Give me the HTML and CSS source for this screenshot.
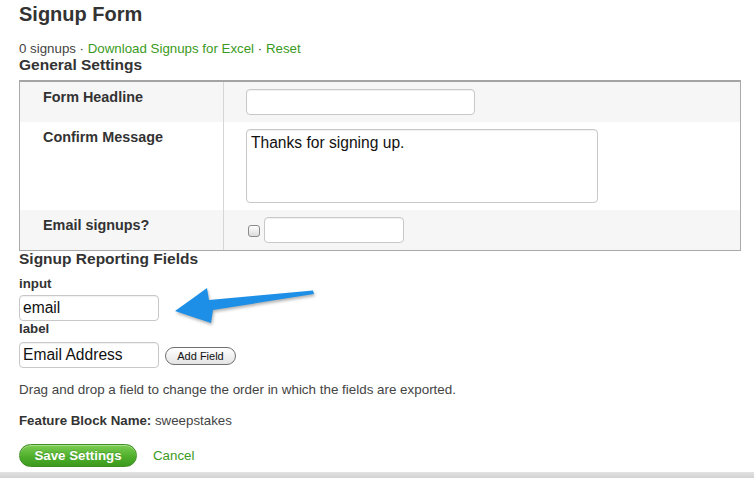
FILE: index.html
```html
<!DOCTYPE html>
<html lang="en">
<head>
<meta charset="utf-8">
<title>Signup Form</title>
<link rel="stylesheet" href="styles.css">
</head>
<body>
<main class="page">
  <h1 class="title">Signup Form</h1>
  <p class="meta">0 signups · <a href="#" class="link">Download Signups for Excel</a> · <a href="#" class="link">Reset</a></p>
  <h2 class="section-title">General Settings</h2>
  <table class="settings">
    <tr class="row-alt">
      <th class="setting-label">Form Headline</th>
      <td class="setting-value"><input class="text-input headline-input" type="text"></td>
    </tr>
    <tr>
      <th class="setting-label">Confirm Message</th>
      <td class="setting-value"><textarea class="text-area">Thanks for signing up.</textarea></td>
    </tr>
    <tr class="row-alt">
      <th class="setting-label">Email signups?</th>
      <td class="setting-value">
        <div class="inline-controls">
          <input class="checkbox" type="checkbox">
          <input class="text-input email-input" type="text">
        </div>
      </td>
    </tr>
  </table>

  <section class="reporting">
    <h2 class="section-title reporting-title">Signup Reporting Fields</h2>
    <label class="field-label">input</label>
    <input class="text-input field-input" type="text" value="email">
    <label class="field-label">label</label>
    <div class="field-row">
      <input class="text-input field-input" type="text" value="Email Address">
      <button class="small-button" type="button">Add Field</button>
    </div>
    <svg class="callout-arrow" width="150" height="48" viewBox="0 0 150 48" aria-hidden="true">
      <polygon points="5,28 37,5 39,17 143,7.5 144,11 43,27 41,40" fill="#1e8fe6"/>
    </svg>
  </section>

  <p class="hint">Drag and drop a field to change the order in which the fields are exported.</p>
  <p class="block-name"><strong>Feature Block Name:</strong> sweepstakes</p>
  <div class="actions">
    <button class="save-button" type="button">Save Settings</button>
    <a href="#" class="link cancel">Cancel</a>
  </div>
</main>
<div class="page-edge"></div>
</body>
</html>
```

FILE: styles.css
```css
* { box-sizing: border-box; }

html, body {
  margin: 0;
  padding: 0;
  background: #fff;
  overflow: hidden;
}

body {
  font-family: "Liberation Sans", Arial, Helvetica, sans-serif;
  color: #333;
}

.page {
  position: relative;
  padding: 2px 0 0 19px;
  height: 472px;
}

.title {
  margin: 0;
  font-size: 20px;
  line-height: 24px;
  font-weight: bold;
  color: #333;
}

.meta {
  margin: 15px 0 0;
  font-size: 13.3px;
  line-height: 15px;
  color: #444;
}

.link {
  color: #3b9a22;
  text-decoration: none;
}

.section-title {
  margin: 1px 0 0;
  font-size: 15.5px;
  line-height: 16px;
  font-weight: bold;
  color: #333;
}

.settings {
  margin-top: 7px;
  width: 722px;
  border-collapse: separate;
  border-spacing: 0;
  border: 1px solid #a9a9a9;
  border-top: 2px solid #a4a4a4;
}

.row-alt { background: #f6f6f6; }

.setting-label {
  width: 204px;
  padding: 7px 10px 7px 23px;
  border-right: 1px solid #d6d6d6;
  text-align: left;
  vertical-align: top;
  font-size: 14.4px;
  line-height: 16px;
  font-weight: bold;
  color: #333;
}

.setting-value {
  padding: 7px 10px 7px 22px;
  vertical-align: top;
}

.text-input,
.text-area {
  display: block;
  margin: 0;
  border: 1px solid #c8c8c8;
  border-radius: 4px;
  background: #fff;
  font-family: "Liberation Sans", Arial, Helvetica, sans-serif;
  font-size: 15.6px;
  color: #111;
  box-shadow: inset 0 1px 1px rgba(0,0,0,0.06);
  outline: none;
}

.text-input {
  height: 26px;
  padding: 0 3px;
}

.headline-input { width: 229px; }

.text-area {
  width: 352px;
  height: 74px;
  padding: 4px 4px;
  line-height: 18px;
  resize: none;
}

.inline-controls {
  display: flex;
  align-items: center;
  gap: 4px;
}

.checkbox {
  appearance: none;
  -webkit-appearance: none;
  width: 12px;
  height: 12px;
  margin: 1px 0 0 2px;
  border: 1px solid #8a8a8a;
  border-radius: 3px;
  background: linear-gradient(#fdfdfd, #dcdcdc);
}

.email-input { width: 140px; }

.reporting-title {
  margin: 1px 0 10px;
  line-height: 14px;
}

.field-label {
  display: block;
  font-size: 13.3px;
  line-height: 16px;
  font-weight: bold;
  color: #333;
}

.field-label + .text-input {
  margin-top: 3px;
}

.field-label + .field-row {
  margin-top: 5px;
}

.field-input {
  width: 140px;
  height: 26px;
}

.field-row {
  display: flex;
  align-items: center;
  gap: 6px;
}

.small-button {
  margin-top: 2px;
  width: 71px;
  height: 18px;
  padding: 0;
  border: 1px solid #6f6f6f;
  border-radius: 9px;
  background: linear-gradient(#ffffff, #e4e4e4);
  font-family: "Liberation Sans", Arial, Helvetica, sans-serif;
  font-size: 11px;
  color: #111;
}

.callout-arrow {
  position: absolute;
  left: 170px;
  top: 283px;
  filter: drop-shadow(1px 2px 1.5px rgba(0,0,0,0.3));
}

.hint {
  margin: 14px 0 0;
  font-size: 13.4px;
  line-height: 16px;
  color: #444;
}

.block-name {
  margin: 15px 0 0;
  font-size: 13.3px;
  line-height: 16px;
  color: #444;
}

.block-name strong { color: #333; }

.actions {
  margin-top: 15px;
  display: flex;
  align-items: center;
  gap: 16px;
}

.save-button {
  width: 118px;
  height: 23px;
  padding: 0;
  border: 1px solid #3e8e22;
  border-radius: 12px;
  background: linear-gradient(#7ccd52, #4faf2c 55%, #3c9a1d);
  box-shadow: inset 0 1px 0 rgba(255,255,255,0.35);
  font-family: "Liberation Sans", Arial, Helvetica, sans-serif;
  font-size: 13.3px;
  font-weight: bold;
  color: #fff;
  text-shadow: 0 -1px 0 rgba(0,0,0,0.15);
}

.cancel {
  font-size: 13.3px;
}

.page-edge {
  height: 6px;
  background: linear-gradient(#e2e2e2, #d2d2d2);
}
```
